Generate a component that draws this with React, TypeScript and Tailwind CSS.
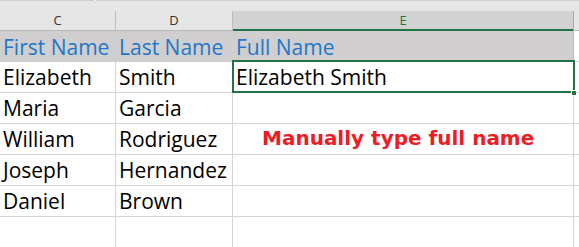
import React from 'react';

const rows = [
  ['Elizabeth', 'Smith', 'Elizabeth Smith'],
  ['Maria', 'Garcia', ''],
  ['William', 'Rodriguez', ''],
  ['Joseph', 'Hernandez', ''],
  ['Daniel', 'Brown', ''],
  ['', '', ''],
];

export default function App() {
  return (
    <div
      className="relative w-[579px] h-[247px] overflow-hidden bg-white"
      style={{ fontFamily: '"Open Sans", sans-serif' }}
    >
      {/* formula bar edge + header strip */}
      <div className="flex h-[11px] bg-[#e6e6e6]">
        <div className="w-[94px] h-px bg-[#cfcfcf]" />
        <div className="w-[2px] h-px bg-[#f4f4f4]" />
        <div className="flex-1 h-px bg-[#cfcfcf]" />
      </div>

      {/* column letters */}
      <div className="grid grid-cols-[116px_117px_341px_1fr] h-[20px] bg-[#e6e6e6] text-[13px] leading-[19px]">
        <div className="border-r border-b border-r-[#bdbdbd] border-b-[#b8b8b8] text-center text-[#333]">C</div>
        <div className="border-r border-b border-r-[#bdbdbd] border-b-[#b8b8b8] text-center text-[#333]">D</div>
        <div className="relative border-r border-r-[#a8a8a8] bg-[#d2d2d2] text-center text-[#217346]">
          E
          <div className="absolute left-0 right-0 bottom-0 h-[2px] bg-[#217346]" />
        </div>
        <div className="border-b border-b-[#b8b8b8]" />
      </div>

      {/* header row */}
      <div className="grid grid-cols-[116px_117px_341px_1fr] h-[31px] text-[21px] leading-[21px] text-[#1e78c9]">
        <div className="flex items-end pl-[3px] pb-[4px] bg-[#d0cece]">First Name</div>
        <div className="flex items-end pl-[3px] pb-[4px] bg-[#d0cece]">Last Name</div>
        <div className="flex items-end pl-[3px] pb-[4px] bg-[#d0cece] border-r border-[#bdbdbd]">Full Name</div>
        <div className="border-b border-[#d4d4d4]" />
      </div>

      {/* data rows */}
      {rows.map((r, i) => (
        <div
          key={i}
          className="grid grid-cols-[116px_117px_341px_1fr] h-[31px] text-[21px] leading-[21px] text-black"
        >
          <div className="flex items-end pl-[3px] pb-[4px] border-r border-b border-[#d4d4d4] whitespace-nowrap">{r[0]}</div>
          <div className="flex items-end pl-[3px] pb-[4px] border-r border-b border-[#d4d4d4] whitespace-nowrap">{r[1]}</div>
          <div className="flex items-end pl-[3px] pb-[4px] border-r border-b border-[#d4d4d4] whitespace-nowrap">
            {i === 2 ? (
              <span
                className="ml-[26px] mb-[1px] text-[20px] font-bold text-[#ee1c25]"
                style={{ fontFamily: '"DejaVu Sans", sans-serif' }}
              >
                Manually type full name
              </span>
            ) : (
              r[2]
            )}
          </div>
          <div className="border-b border-[#d4d4d4]" />
        </div>
      ))}

      {/* selected cell outline */}
      <div className="absolute left-[232px] top-[60px] w-[343px] h-[33px] border-2 border-[#217346] pointer-events-none" />
      <div className="absolute left-[571px] top-[90px] w-[6px] h-[6px] bg-[#217346] border border-white" />
    </div>
  );
}
